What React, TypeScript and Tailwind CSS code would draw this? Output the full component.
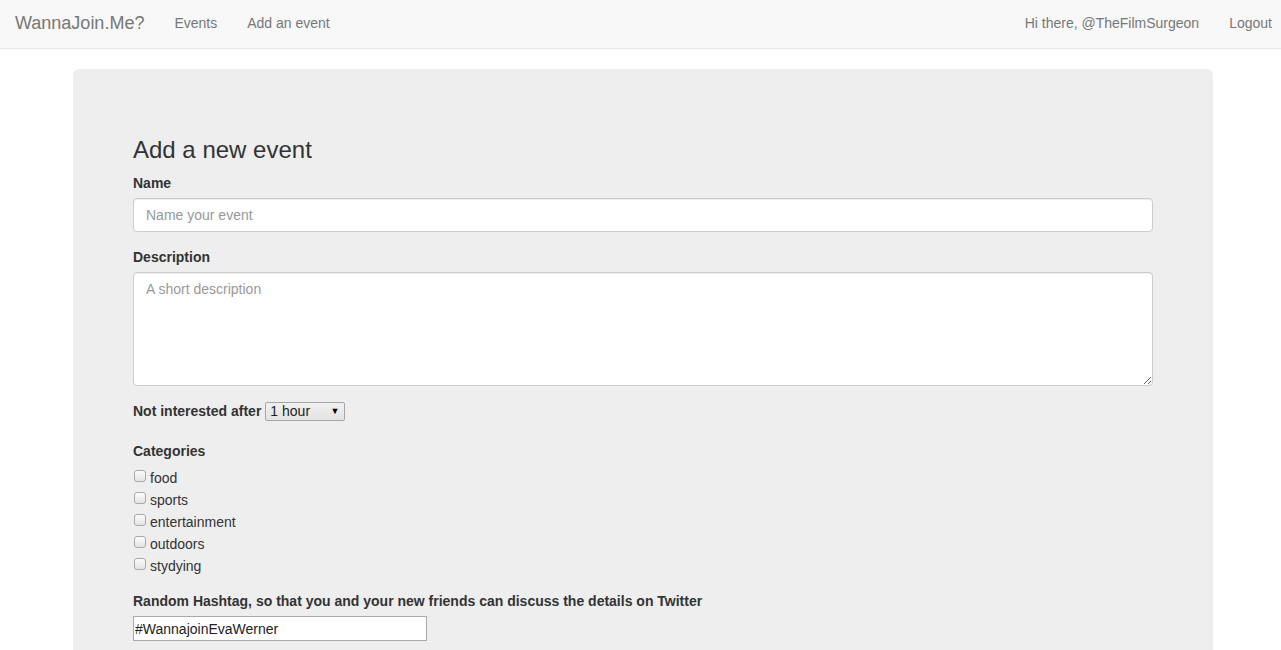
import React from "react";

const font = { fontFamily: '"Liberation Sans", Arial, Helvetica, sans-serif' };

export default function App() {
  const cats = ["food", "sports", "entertainment", "outdoors", "stydying"];
  return (
    <div className="min-h-[650px] bg-white text-[14px] leading-[20px] text-[#333]" style={font}>
      <nav className="flex h-[49px] items-center justify-between border-b border-[#e7e7e7] bg-[#f8f8f8] pb-[2px]">
        <div className="flex items-center">
          <a className="pl-[15px] pr-[15px] text-[18px] leading-[20px] text-[#777]">WannaJoin.Me?</a>
          <a className="px-[15px] text-[#777]">Events</a>
          <a className="px-[15px] text-[#777]">Add an event</a>
        </div>
        <div className="flex items-center">
          <a className="px-[15px] text-[#777]">Hi there, @TheFilmSurgeon</a>
          <a className="pl-[15px] pr-[9px] text-[#777]">Logout</a>
        </div>
      </nav>
      <div className="ml-[73px] mt-[20px] w-[1140px] rounded-t-[6px] bg-[#eeeeee] px-[60px] pb-[48px] pt-[68px]">
        <h3 className="mb-[10px] text-[24px] leading-[26px] font-normal text-[#333]">Add a new event</h3>
        <div className="mb-[15px]">
          <label className="mb-[5px] block font-bold">Name</label>
          <input
            className="block h-[34px] w-full rounded-[4px] border border-[#ccc] bg-white px-[12px] py-[6px] text-[14px] text-[#555] shadow-[inset_0_1px_1px_rgba(0,0,0,0.075)] outline-none placeholder:text-[#999]"
            placeholder="Name your event"
            style={font}
          />
        </div>
        <div className="mb-[15px]">
          <label className="mb-[5px] block font-bold">Description</label>
          <textarea
            className="block h-[114px] w-full rounded-[4px] border border-[#ccc] bg-white px-[12px] py-[6px] text-[14px] leading-[20px] text-[#555] shadow-[inset_0_1px_1px_rgba(0,0,0,0.075)] outline-none placeholder:text-[#999]"
            placeholder="A short description"
            style={font}
          />
        </div>
        <div className="flex h-[20px] items-center">
          <span className="font-bold">Not interested after</span>
          <div className="ml-[4px] flex h-[19px] w-[80px] items-center justify-between rounded-[2px] border border-[#a6a6a6] bg-gradient-to-b from-[#f0f0f0] to-[#e3e3e3] pl-[4px] pr-[5px] text-[14px] text-[#222]">
            <span>1 hour</span>
            <span className="text-[9px] leading-none text-black">▼</span>
          </div>
        </div>
        <div className="mt-[20px]">
          <label className="mb-[6px] block font-bold">Categories</label>
          <div className="flex flex-col">
            {cats.map((c) => (
              <label key={c} className="flex h-[22px] items-center">
                <input
                  type="checkbox"
                  className="m-0 mb-[5px] ml-[1px] h-[12px] w-[12px] appearance-none rounded-[3px] border border-[#a9a9a9] bg-gradient-to-b from-[#fcfcfc] to-[#e4e4e4]"
                />
                <span className="ml-[4px]">{c}</span>
              </label>
            ))}
          </div>
        </div>
        <div className="mt-[14px]">
          <label className="mb-[5px] block font-bold">Random Hashtag, so that you and your new friends can discuss the details on Twitter</label>
          <input
            className="block h-[25px] w-[294px] border border-[#a9a9a9] bg-white px-[1px] text-[14px] text-[#222] outline-none"
            defaultValue="#WannajoinEvaWerner"
            style={font}
          />
        </div>
      </div>
    </div>
  );
}
